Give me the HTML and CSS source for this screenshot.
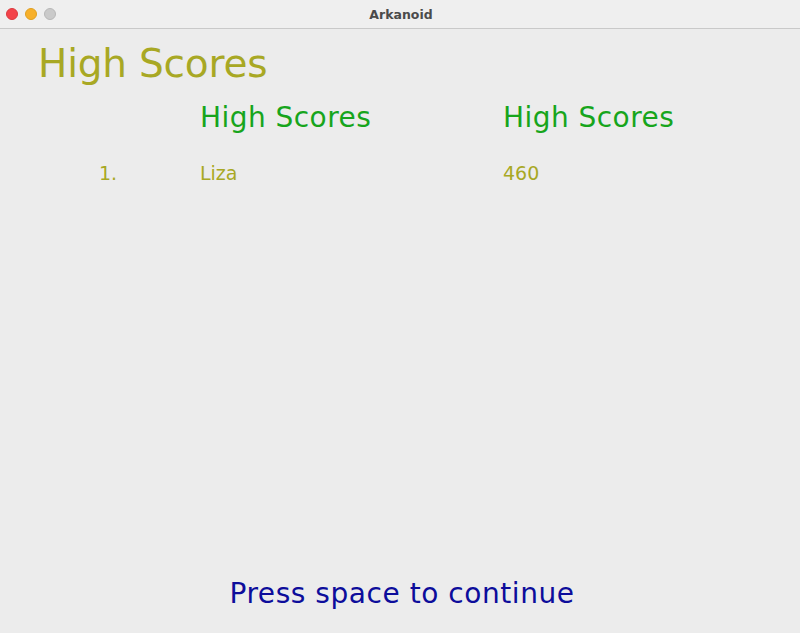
FILE: index.html
```html
<!DOCTYPE html>
<html>
<head>
<meta charset="utf-8">
<link rel="stylesheet" href="styles.css">
</head>
<body>
<div class="window">
  <div class="titlebar">
    <div class="lights">
      <span class="light red"></span>
      <span class="light yellow"></span>
      <span class="light grey"></span>
    </div>
    <div class="title">Arkanoid</div>
  </div>
  <div class="content">
    <h1 class="main-title">High Scores</h1>
    <div class="table">
      <div class="cell"></div>
      <div class="cell head">High Scores</div>
      <div class="cell head">High Scores</div>
      <div class="cell row rank">1.</div>
      <div class="cell row">Liza</div>
      <div class="cell row">460</div>
    </div>
    <div class="spacer"></div>
    <div class="prompt">Press space to continue</div>
  </div>
</div>
</body>
</html>
```
FILE: styles.css
```css
html, body {
  margin: 0;
  padding: 0;
  width: 800px;
  height: 633px;
  overflow: hidden;
  background: #ececec;
  font-family: "DejaVu Sans", Verdana, sans-serif;
}
.window {
  display: flex;
  flex-direction: column;
  height: 633px;
}
.titlebar {
  height: 28px;
  border-bottom: 1px solid #c9c9c9;
  background: #efefef;
  display: flex;
  align-items: center;
  justify-content: center;
  position: relative;
  flex: none;
}
.lights {
  position: absolute;
  left: 6px;
  top: 8px;
  display: flex;
  gap: 7px;
}
.light {
  width: 12px;
  height: 12px;
  border-radius: 50%;
  box-sizing: border-box;
}
.red { background: #f3434a; border: 1px solid #dc3a3f; }
.yellow { background: #f7b02a; border: 1px solid #e0a020; }
.grey { background: #cacaca; border: 1px solid #b8b8b8; }
.title {
  font-size: 12.5px;
  font-weight: bold;
  color: #4b4b4b;
  padding-left: 2px;
}
.content {
  flex: 1;
  display: flex;
  flex-direction: column;
}
.main-title {
  margin: 15px 0 0 38px;
  font-size: 39px;
  line-height: 39px;
  font-weight: normal;
  letter-spacing: -0.2px;
  color: #a8a824;
}
.table {
  display: grid;
  grid-template-columns: 103px 303px 1fr;
  margin-left: 97px;
  margin-top: 21px;
  row-gap: 32px;
}
.head {
  font-size: 28px;
  line-height: 28px;
  letter-spacing: 0.45px;
  color: #17a51c;
}
.row {
  font-size: 19px;
  line-height: 19px;
  color: #a8a824;
}
.rank {
  padding-left: 2px;
}
.spacer { flex: 1; }
.prompt {
  text-align: center;
  padding-left: 4px;
  font-size: 28px;
  line-height: 28px;
  letter-spacing: 0.55px;
  color: #0d0d9b;
  margin-bottom: 25px;
}
```
